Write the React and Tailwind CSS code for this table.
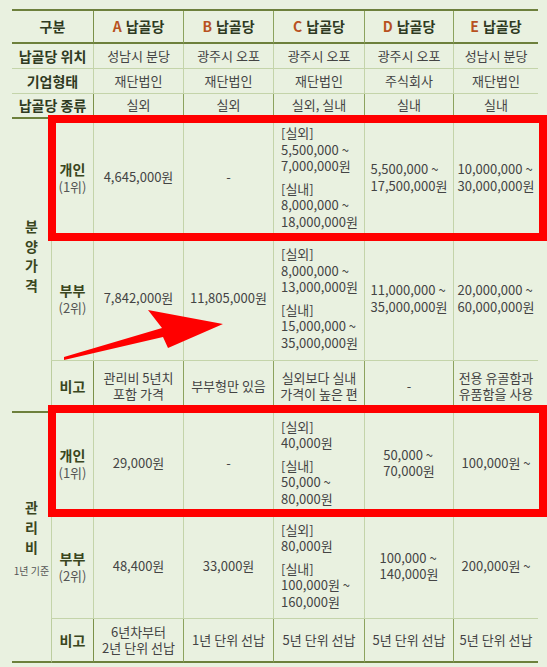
import React from "react";

const F = "font-['Noto_Sans_CJK_KR','Noto_Sans',sans-serif]";

const V = "border-l border-[#8ca35e]";
const VA = "border-l border-[#7b9149]";
const thin = "border-b border-[#c4d4aa]";
const thick = "border-b-2 border-b-[#6d803c]";

const cellBase = "flex items-center justify-center text-center text-[13px] text-[#444] leading-[16.5px]";

function Head({ letter, first, children }) {
  return (
    <div className={"flex items-center justify-center font-bold text-[14px] text-[#2f3a22] " + (first ? VA : V) + " " + thick}>
      <span className="text-[#b8521f] mr-[4px]">{letter}</span>
      {children}
    </div>
  );
}

function Label({ children, bottom }) {
  return (
    <div className={"col-span-2 flex items-center justify-center font-bold text-[14px] text-[#2f3a22] " + bottom}>
      {children}
    </div>
  );
}

function Cell({ children, first, bottom }) {
  return <div className={cellBase + " " + (first ? VA : V) + " " + bottom}>{children}</div>;
}

function LeftCell({ children, bottom }) {
  return (
    <div className={"flex items-center text-left text-[13px] text-[#444] leading-[16.5px] pl-[7px] " + V + " " + bottom}>
      {children}
    </div>
  );
}

function Block({ lines }) {
  return (
    <span className="inline-block text-left">
      {lines.map((l, i) => (
        <span key={i} className="block whitespace-nowrap">{l}</span>
      ))}
    </span>
  );
}

function Lines({ lines }) {
  return (
    <span className="block">
      {lines.map((l, i) => (
        <span key={i} className="block whitespace-nowrap">{l}</span>
      ))}
    </span>
  );
}

function Multi({ groups }) {
  return (
    <span className="block">
      {groups.map((g, gi) => (
        <span key={gi} className={"block " + (gi > 0 ? "mt-[6px]" : "")}>
          {g.map((l, i) => (
            <span key={i} className="block whitespace-nowrap">{l}</span>
          ))}
        </span>
      ))}
    </span>
  );
}

function Sub({ a, b, bottom }) {
  return (
    <div className={"flex flex-col items-center justify-center border-l border-[#bccd9f] " + bottom}>
      <div className="font-bold text-[14px] text-[#3a4620] leading-[18px]">{a}</div>
      {b && <div className="text-[13px] text-[#555] leading-[17px]">{b}</div>}
    </div>
  );
}

export default function App() {
  return (
    <div className={"relative w-[547px] h-[667px] bg-[#e9f1e0] overflow-hidden " + F}>
      <div className="pt-[9px] pl-[12px]">
        <div className="grid w-[526px] grid-cols-[39px_42px_90px_90px_91px_89px_85px] grid-rows-[33px_25px_25px_25px_118px_124px_52px_101px_105px_44px] border-t-2 border-[#6d803c]">
          {/* header */}
          <div className={"col-span-2 flex items-center justify-center font-bold text-[14px] text-[#2f3a22] " + thick}>구분</div>
          <Head letter="A" first>납골당</Head>
          <Head letter="B">납골당</Head>
          <Head letter="C">납골당</Head>
          <Head letter="D">납골당</Head>
          <Head letter="E">납골당</Head>

          {/* 위치 */}
          <Label bottom={thin}>납골당 위치</Label>
          <Cell first bottom={thin}>성남시 분당</Cell>
          <Cell bottom={thin}>광주시 오포</Cell>
          <Cell bottom={thin}>광주시 오포</Cell>
          <Cell bottom={thin}>광주시 오포</Cell>
          <Cell bottom={thin}>성남시 분당</Cell>

          {/* 기업형태 */}
          <Label bottom={thin}>기업형태</Label>
          <Cell first bottom={thin}>재단법인</Cell>
          <Cell bottom={thin}>재단법인</Cell>
          <Cell bottom={thin}>재단법인</Cell>
          <Cell bottom={thin}>주식회사</Cell>
          <Cell bottom={thin}>재단법인</Cell>

          {/* 종류 */}
          <Label bottom={thick}>납골당 종류</Label>
          <Cell first bottom={thick}>실외</Cell>
          <Cell bottom={thick}>실외</Cell>
          <Cell bottom={thick}>실외, 실내</Cell>
          <Cell bottom={thick}>실내</Cell>
          <Cell bottom={thick}>실내</Cell>

          {/* 분양가격 */}
          <div className={"row-span-3 flex flex-col items-center justify-center pb-[18px] font-bold text-[14px] text-[#3a4620] leading-[19.5px] " + thick}>
            <span>분</span>
            <span>양</span>
            <span>가</span>
            <span>격</span>
          </div>
          <Sub a="개인" b="(1위)" bottom={thin} />
          <Cell first bottom={thin}>4,645,000원</Cell>
          <Cell bottom={thin}>-</Cell>
          <LeftCell bottom={thin}>
            <Multi groups={[["[실외]", "5,500,000 ~", "7,000,000원"], ["[실내]", "8,000,000 ~", "18,000,000원"]]} />
          </LeftCell>
          <Cell bottom={thin}><Block lines={["5,500,000 ~", "17,500,000원"]} /></Cell>
          <Cell bottom={thin}><Block lines={["10,000,000 ~", "30,000,000원"]} /></Cell>

          <Sub a="부부" b="(2위)" bottom={thin} />
          <Cell first bottom={thin}>7,842,000원</Cell>
          <Cell bottom={thin}>11,805,000원</Cell>
          <LeftCell bottom={thin}>
            <Multi groups={[["[실외]", "8,000,000 ~", "13,000,000원"], ["[실내]", "15,000,000 ~", "35,000,000원"]]} />
          </LeftCell>
          <Cell bottom={thin}><Block lines={["11,000,000 ~", "35,000,000원"]} /></Cell>
          <Cell bottom={thin}><Block lines={["20,000,000 ~", "60,000,000원"]} /></Cell>

          <Sub a="비고" bottom={thick} />
          <Cell first bottom={thick}><Lines lines={["관리비 5년치", "포함 가격"]} /></Cell>
          <Cell bottom={thick}>부부형만 있음</Cell>
          <Cell bottom={thick}><Lines lines={["실외보다 실내", "가격이 높은 편"]} /></Cell>
          <Cell bottom={thick}>-</Cell>
          <Cell bottom={thick}><Lines lines={["전용 유골함과", "유품함을 사용"]} /></Cell>

          {/* 관리비 */}
          <div className={"row-span-3 flex flex-col items-center justify-center " + thick}>
            <div className="flex flex-col items-center font-bold text-[14px] text-[#3a4620] leading-[20px]">
              <span>관</span>
              <span>리</span>
              <span>비</span>
            </div>
            <div className="mt-[8px] text-[10px] text-[#555] leading-[12px] whitespace-nowrap">1년 기준</div>
          </div>
          <Sub a="개인" b="(1위)" bottom={thin} />
          <Cell first bottom={thin}>29,000원</Cell>
          <Cell bottom={thin}>-</Cell>
          <LeftCell bottom={thin}>
            <Multi groups={[["[실외]", "40,000원"], ["[실내]", "50,000 ~", "80,000원"]]} />
          </LeftCell>
          <Cell bottom={thin}><Block lines={["50,000 ~", "70,000원"]} /></Cell>
          <Cell bottom={thin}>100,000원 ~</Cell>

          <Sub a="부부" b="(2위)" bottom={thin} />
          <Cell first bottom={thin}>48,400원</Cell>
          <Cell bottom={thin}>33,000원</Cell>
          <LeftCell bottom={thin}>
            <Multi groups={[["[실외]", "80,000원"], ["[실내]", "100,000원 ~", "160,000원"]]} />
          </LeftCell>
          <Cell bottom={thin}><Block lines={["100,000 ~", "140,000원"]} /></Cell>
          <Cell bottom={thin}>200,000원 ~</Cell>

          <Sub a="비고" bottom={thick} />
          <Cell first bottom={thick}><Lines lines={["6년차부터", "2년 단위 선납"]} /></Cell>
          <Cell bottom={thick}>1년 단위 선납</Cell>
          <Cell bottom={thick}>5년 단위 선납</Cell>
          <Cell bottom={thick}>5년 단위 선납</Cell>
          <Cell bottom={thick}>5년 단위 선납</Cell>
        </div>
      </div>

      <div className="absolute left-[48px] top-[115px] w-[499px] h-[126px] border-[8px] border-[#ff0000] pointer-events-none" />
      <div className="absolute left-[48px] top-[405px] w-[499px] h-[112px] border-[8px] border-[#ff0000] pointer-events-none" />

      <svg className="absolute left-0 top-0 pointer-events-none" width="547" height="667" viewBox="0 0 547 667">
        <polygon points="64,357 162,328 148,310 223,324 168,348 163,337 64,360" fill="#ff0000" />
      </svg>
    </div>
  );
}
